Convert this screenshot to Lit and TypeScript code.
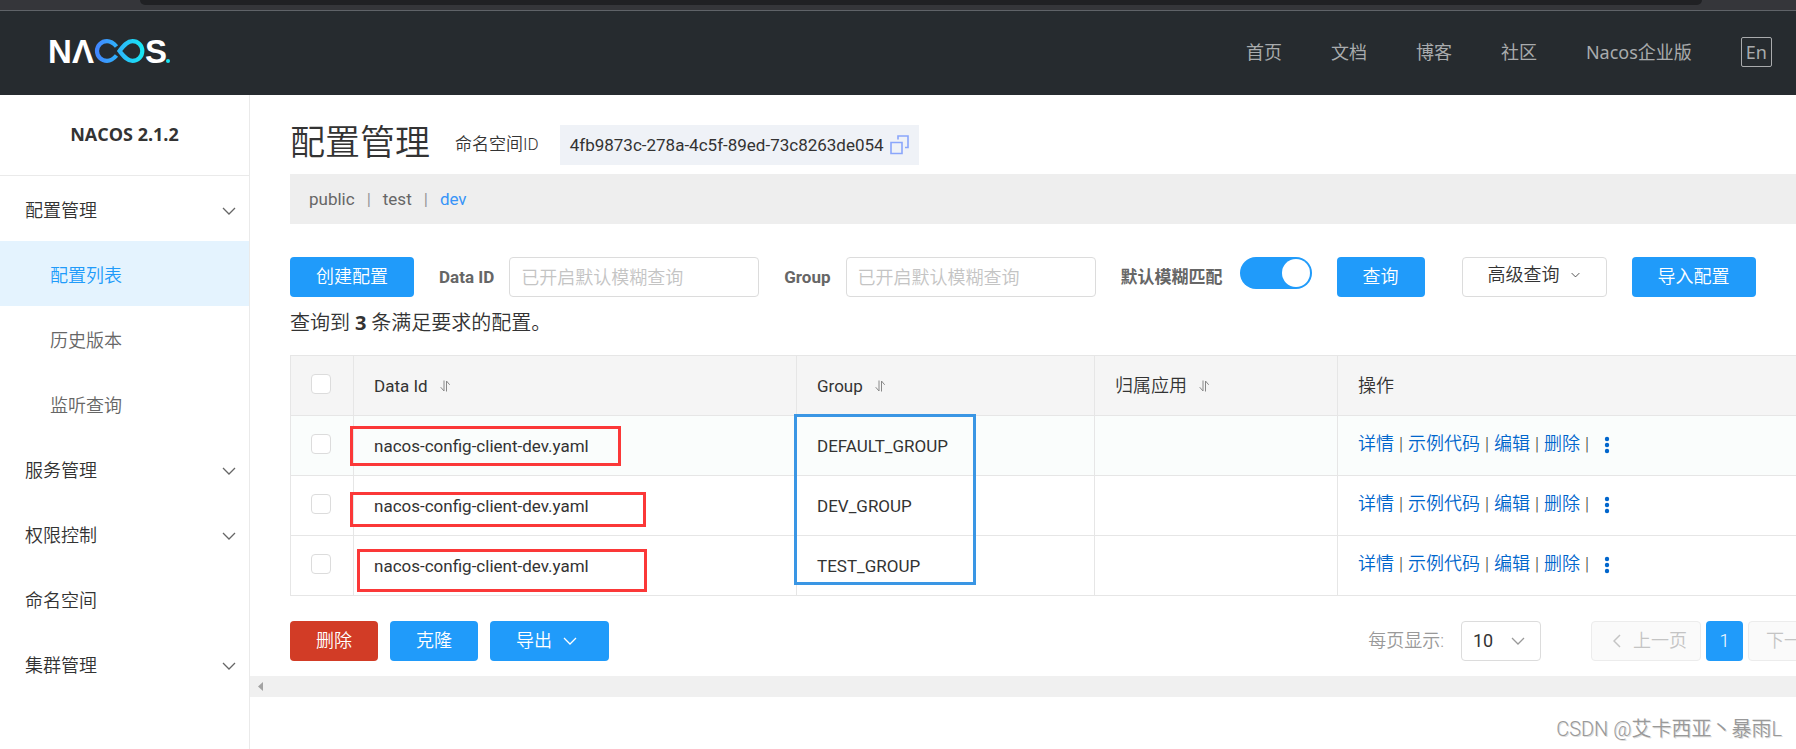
import { LitElement, html, css, svg } from "lit";
import { customElement, state } from "lit/decorators.js";

interface MenuItem {
  label: string;
  expandable?: boolean;
  children?: string[];
}

const MENU: MenuItem[] = [
  { label: "配置管理", expandable: true, children: ["配置列表", "历史版本", "监听查询"] },
  { label: "服务管理", expandable: true },
  { label: "权限控制", expandable: true },
  { label: "命名空间" },
  { label: "集群管理", expandable: true },
];

const NAV = ["首页", "文档", "博客", "社区", "Nacos企业版"];
const NAMESPACES = ["public", "test", "dev"];
const ACTIONS = ["详情", "示例代码", "编辑", "删除"];
const ROWS = [
  { dataId: "nacos-config-client-dev.yaml", group: "DEFAULT_GROUP" },
  { dataId: "nacos-config-client-dev.yaml", group: "DEV_GROUP" },
  { dataId: "nacos-config-client-dev.yaml", group: "TEST_GROUP" },
];

const chevron = html`<svg class="chevron" viewBox="0 0 14 8" aria-hidden="true">
  ${svg`<path d="M1 1l6 6 6-6" fill="none" stroke="currentColor" stroke-width="1.3"/>`}
</svg>`;

const sortIcon = html`<svg class="sort" viewBox="0 0 10 12" aria-hidden="true">
  ${svg`<path d="M4 0.5V11L0.7 7.2M6.5 11.5V1L9.7 4.8" fill="none" stroke="currentColor" stroke-width="1"/>`}
</svg>`;

@customElement("nacos-header")
export class NacosHeader extends LitElement {
  static styles = css`
    :host {
      display: block;
      font-family: "Noto Sans", "Noto Sans CJK SC", sans-serif;
    }
    .browser {
      height: 10px;
      padding: 0 94px 0 140px;
      background: #35363a;
      border-bottom: 1px solid #5f6368;
    }
    .omnibox {
      height: 5px;
      background: #202124;
      border-radius: 0 0 14px 14px;
    }
    .bar {
      display: flex;
      align-items: center;
      justify-content: space-between;
      height: 84px;
      padding: 0 24px 0 50px;
      background: #262b2f;
    }
    .logo {
      display: block;
      width: 122px;
      height: 26px;
      margin-bottom: 4px;
      overflow: visible;
    }
    .logo text {
      font: bold 33px "Liberation Sans", sans-serif;
      fill: #fff;
    }
    .nav {
      display: flex;
      align-items: center;
      gap: 49px;
      margin-bottom: 2px;
    }
    .link {
      color: #a9abad;
      font-size: 18px;
      line-height: 28px;
      text-decoration: none;
    }
    .lang {
      height: 30px;
      padding: 0 4px;
      border: 1px solid #a9abad;
      border-radius: 2px;
      background: none;
      color: #a9abad;
      font: 18px/26px "Noto Sans", sans-serif;
    }
  `;

  render() {
    return html`
      <div class="browser"><div class="omnibox"></div></div>
      <header class="bar">
        <svg class="logo" viewBox="0 0 122 26" role="img" aria-label="NACOS">
          <defs>
            <linearGradient id="flow" x1="0" x2="1">
              <stop offset="0" stop-color="#4287ff"></stop>
              <stop offset="1" stop-color="#17e6f5"></stop>
            </linearGradient>
          </defs>
          <text x="-2" y="25">N</text>
          <text x="22" y="25">Λ</text>
          <text x="95" y="25">S</text>
          <path
            d="M66.5 8.5C63.5 5 60.5 3.200 57 3.200C51.500 3.200 47 7.600 47 13C47 18.400 51.500 22.800 57 22.800C60.500 22.800 63.500 21 66.500 17.500M69.500 13C73.500 8 77 3.200 82.500 3.200C88 3.200 92.300 7.600 92.300 13C92.300 18.400 88 22.800 82.500 22.800C77 22.800 73.500 18 69.500 13Z"
            fill="none" stroke="url(#flow)" stroke-width="4.200"></path>
          <circle cx="118" cy="23" r="2" fill="#17e6f5"></circle>
        </svg>
        <nav class="nav">
          ${NAV.map((n) => html`<a class="link" href="#">${n}</a>`)}
          <button class="lang">En</button>
        </nav>
      </header>
    `;
  }
}

@customElement("nacos-sidebar")
export class NacosSidebar extends LitElement {
  static styles = css`
    :host {
      display: block;
      box-sizing: border-box;
      width: 250px;
      flex: none;
      border-right: 1px solid #eaeaea;
      font-family: Roboto, "Noto Sans CJK SC", sans-serif;
      font-weight: 350;
    }
    .title {
      margin: 0;
      padding-bottom: 2px;
      border-bottom: 1px solid #eaeaea;
      color: #333;
      font: bold 18px/78px "Open Sans", sans-serif;
      text-align: center;
    }
    .list {
      margin: 0;
      padding: 0;
      list-style: none;
    }
    .item {
      display: flex;
      align-items: center;
      justify-content: space-between;
      height: 65px;
      padding: 4px 13px 0 25px;
      box-sizing: border-box;
      color: #333;
      font-size: 18px;
      line-height: 28px;
      text-decoration: none;
    }
    .child {
      padding-left: 50px;
      color: #666;
    }
    .active {
      background: #e4f3fe;
      color: #209bfa;
    }
    .chevron {
      width: 14px;
      height: 8px;
      color: #666;
    }
  `;

  render() {
    return html`
      <h3 class="title">NACOS 2.1.2</h3>
      <ul class="list">
        ${MENU.map(
          (m) => html`
            <li>
              <a class="item" href="#">${m.label}${m.expandable ? chevron : ""}</a>
              ${m.children
                ? html`<ul class="list">
                    ${m.children.map(
                      (c, i) => html`<li>
                        <a class="item child ${i === 0 ? "active" : ""}" href="#">${c}</a>
                      </li>`,
                    )}
                  </ul>`
                : ""}
            </li>
          `,
        )}
      </ul>
    `;
  }
}

@customElement("config-list")
export class ConfigList extends LitElement {
  @state() private fuzzy = true;

  static styles = css`
    :host {
      display: block;
      flex: 1;
      min-width: 0;
      overflow: hidden;
      color: #333;
      font: 350 18px/28px Roboto, "Noto Sans CJK SC", sans-serif;
    }
    .content {
      min-width: 1568px;
      padding: 30px 0 15px 40px;
    }
    .latin {
      font-size: 17px;
      font-weight: 400;
    }
    .head {
      display: flex;
      align-items: center;
      height: 38px;
      padding-bottom: 2px;
    }
    .title {
      margin: 0 25px 0 0;
      font-size: 35px;
      font-weight: 350;
      line-height: 40px;
    }
    .ns-label {
      font-size: 17px;
    }
    .ns-id {
      display: flex;
      align-items: center;
      gap: 6px;
      height: 40px;
      margin: 2px 0 0 21px;
      padding: 0 10px;
      box-sizing: border-box;
      background: #eff2f7;
    }
    .copy {
      display: block;
      padding: 0;
      border: 0;
      background: none;
      color: #8aa6fb;
    }
    .copy svg {
      display: block;
      width: 19px;
      height: 20px;
    }
    .ns-bar {
      display: flex;
      align-items: center;
      gap: 12px;
      height: 50px;
      margin: 9px 0 33px;
      padding-left: 19px;
      box-sizing: border-box;
      background: #eee;
      color: #999;
    }
    .ns {
      color: #666;
      text-decoration: none;
    }
    .ns.current {
      color: #3794f8;
    }
    .tools {
      display: flex;
      align-items: center;
      gap: 25px;
    }
    .btn {
      display: inline-flex;
      align-items: center;
      justify-content: center;
      height: 40px;
      padding: 0 26px;
      box-sizing: border-box;
      border: 0;
      border-radius: 4px;
      background: #209bfa;
      color: #fff;
      font: inherit;
    }
    .btn .chevron {
      margin: 0 6px 0 11px;
    }
    .danger {
      background: #d23c26;
    }
    .btn.normal {
      padding: 0 20px 4px 25px;
      border: 1px solid #dcdcdc;
      background: #fff;
      color: #333;
    }
    .advanced {
      margin-left: 12px;
    }
    .advanced .chevron {
      width: 9px;
      height: 6px;
    }
    .field {
      display: flex;
      align-items: center;
      gap: 15px;
      height: 40px;
    }
    .label {
      color: #666;
      font-weight: 700;
      font-size: 17px;
    }
    .input {
      width: 250px;
      height: 40px;
      padding: 0 11px;
      box-sizing: border-box;
      border: 1px solid #dcdcdc;
      border-radius: 4px;
      color: #333;
      font: inherit;
    }
    .input::placeholder {
      color: #c4c4c4;
    }
    .switch {
      position: relative;
      width: 72px;
      height: 32px;
      margin: 0 0 0 2px;
      align-self: flex-start;
      border-radius: 16px;
      background: #ccc;
      appearance: none;
    }
    .switch::before {
      content: "";
      position: absolute;
      top: 2px;
      left: 2px;
      width: 28px;
      height: 28px;
      border-radius: 50%;
      background: #fff;
    }
    .switch:checked {
      background: #209bfa;
    }
    .switch:checked::before {
      left: auto;
      right: 2px;
    }
    .summary {
      margin: 12px 0 18px;
      font-size: 20px;
    }
    .summary strong {
      font-family: "Open Sans", sans-serif;
      font-weight: 700;
    }
    .board {
      position: relative;
    }
    .table {
      width: 100%;
      border-collapse: collapse;
      table-layout: fixed;
    }
    .c-check {
      width: 63px;
    }
    .c-id {
      width: 443px;
    }
    .c-group {
      width: 298px;
    }
    .c-app {
      width: 243px;
    }
    .cell {
      height: 60px;
      padding: 0 20px;
      box-sizing: border-box;
      border: 1px solid #e6e6e6;
      font-weight: 350;
      text-align: left;
      white-space: nowrap;
    }
    .cell.latin {
      font-weight: 400;
    }
    .th {
      background: #f5f5f5;
    }
    .hover {
      background: #fafdfc;
    }
    .check {
      display: block;
      width: 20px;
      height: 20px;
      margin: 0 0 4px;
      border: 1px solid #dcdcdc;
      border-radius: 4px;
      background: #fff;
      appearance: none;
    }
    .sort {
      width: 10px;
      height: 12px;
      margin-left: 12px;
      color: #888;
    }
    .actions {
      display: flex;
      align-items: center;
      gap: 5px;
      padding-bottom: 4px;
    }
    .act {
      color: #06c;
      text-decoration: none;
    }
    .more {
      display: block;
      margin: 2px 0 0 10px;
      padding: 0;
      border: 0;
      background: none;
      color: #06c;
    }
    .more svg {
      display: block;
      width: 6px;
      height: 18px;
    }
    .mark {
      position: absolute;
      box-sizing: border-box;
      border: 3px solid #fb3838;
      pointer-events: none;
    }
    .m1 {
      left: 60px;
      top: 71px;
      width: 271px;
      height: 40px;
    }
    .m2 {
      left: 60px;
      top: 137px;
      width: 296px;
      height: 35px;
    }
    .m3 {
      left: 67px;
      top: 194px;
      width: 290px;
      height: 43px;
    }
    .m4 {
      left: 504px;
      top: 59px;
      width: 182px;
      height: 171px;
      border-color: #3a96e4;
    }
    .footer {
      display: flex;
      justify-content: space-between;
      margin-top: 25px;
    }
    .batch {
      display: flex;
      gap: 12px;
    }
    .pager {
      display: flex;
      align-items: center;
      gap: 5px;
    }
    .size {
      display: flex;
      align-items: center;
      gap: 17px;
      margin-right: 45px;
      color: #999;
    }
    .select-box {
      display: grid;
      align-items: center;
      width: 80px;
      color: #999;
    }
    .select-box > * {
      grid-area: 1 / 1;
    }
    .select-box .chevron {
      justify-self: end;
      margin-right: 16px;
      pointer-events: none;
    }
    .select {
      height: 40px;
      padding: 0 11px;
      border: 1px solid #dcdcdc;
      border-radius: 4px;
      background: #fff;
      color: #333;
      font: inherit;
      font-weight: 400;
      appearance: none;
    }
    .page {
      height: 40px;
      min-width: 37px;
      padding: 0 12px;
      border: 0;
      border-radius: 4px;
      background: #209bfa;
      color: #fff;
      font: inherit;
    }
    .step {
      display: flex;
      align-items: center;
      justify-content: center;
      gap: 12px;
      width: 110px;
      border: 1px solid #ececec;
      background: #fafafa;
      color: #c4c4c4;
    }
    .prev {
      padding-left: 20px;
    }
    .step svg {
      width: 8px;
      height: 14px;
    }
    .chevron {
      width: 14px;
      height: 8px;
    }
    .scroll {
      display: flex;
      align-items: center;
      height: 21px;
      padding-left: 8px;
      background: #f0f0f0;
    }
    .scroll svg {
      width: 5px;
      height: 9px;
    }
    .watermark {
      margin: 18px 14px 0 0;
      color: #999;
      font-size: 20px;
      line-height: 28px;
      text-align: right;
      text-shadow: 1px 1px 0 #ddd;
    }
  `;

  private renderRow(row: { dataId: string; group: string }, index: number) {
    return html`
      <tr class=${index === 0 ? "hover" : ""}>
        <td class="cell">
          <input class="check" type="checkbox" aria-label="选择 ${row.group}" />
        </td>
        <td class="cell latin">${row.dataId}</td>
        <td class="cell latin">${row.group}</td>
        <td class="cell"></td>
        <td class="cell">
          <div class="actions">
            ${ACTIONS.map((a) => html`<a class="act" href="#">${a}</a><span>|</span>`)}
            <button class="more" aria-label="更多">
              <svg viewBox="0 0 6 18">
                <circle cx="3" cy="3" r="2.200" fill="currentColor"></circle>
                <circle cx="3" cy="9" r="2.200" fill="currentColor"></circle>
                <circle cx="3" cy="15" r="2.200" fill="currentColor"></circle>
              </svg>
            </button>
          </div>
        </td>
      </tr>
    `;
  }

  render() {
    return html`
      <div class="content">
        <div class="head">
          <h1 class="title">配置管理</h1>
          <span class="ns-label">命名空间ID</span>
          <span class="ns-id latin">
            4fb9873c-278a-4c5f-89ed-73c8263de054
            <button class="copy" aria-label="复制">
              <svg viewBox="0 0 19 20">
                <path d="M1 7.500h11v11H1zM8 4.500V1h10v11.500h-3" fill="none" stroke="currentColor" stroke-width="1.600"></path>
              </svg>
            </button>
          </span>
        </div>
        <nav class="ns-bar latin">
          ${NAMESPACES.map(
            (n, i) => html`${i ? html`<span>|</span>` : ""}<a
                class="ns ${n === "dev" ? "current" : ""}"
                href="#"
                >${n}</a
              >`,
          )}
        </nav>
        <div class="tools">
          <button class="btn">创建配置</button>
          <div class="field">
            <label class="label" for="data-id">Data ID</label>
            <input class="input" id="data-id" placeholder="已开启默认模糊查询" />
          </div>
          <div class="field">
            <label class="label" for="group">Group</label>
            <input class="input" id="group" placeholder="已开启默认模糊查询" />
          </div>
          <div class="field">
            <label class="label" for="fuzzy">默认模糊匹配</label>
            <input
              class="switch"
              id="fuzzy"
              type="checkbox"
              role="switch"
              .checked=${this.fuzzy}
              @change=${() => (this.fuzzy = !this.fuzzy)}
            />
          </div>
          <button class="btn">查询</button>
          <button class="btn normal advanced">高级查询${chevron}</button>
          <button class="btn">导入配置</button>
        </div>
        <p class="summary">查询到 <strong>3</strong> 条满足要求的配置。</p>
        <div class="board">
          <table class="table">
            <colgroup>
              <col class="c-check" />
              <col class="c-id" />
              <col class="c-group" />
              <col class="c-app" />
              <col />
            </colgroup>
            <thead>
              <tr>
                <th class="cell th">
                  <input class="check" type="checkbox" aria-label="全选" />
                </th>
                <th class="cell th latin">Data Id${sortIcon}</th>
                <th class="cell th latin">Group${sortIcon}</th>
                <th class="cell th">归属应用${sortIcon}</th>
                <th class="cell th">操作</th>
              </tr>
            </thead>
            <tbody>
              ${ROWS.map((r, i) => this.renderRow(r, i))}
            </tbody>
          </table>
          <div class="mark m1"></div>
          <div class="mark m2"></div>
          <div class="mark m3"></div>
          <div class="mark m4"></div>
        </div>
        <div class="footer">
          <div class="batch">
            <button class="btn danger">删除</button>
            <button class="btn">克隆</button>
            <button class="btn">导出${chevron}</button>
          </div>
          <div class="pager">
            <div class="size">
              <label for="page-size">每页显示:</label>
              <span class="select-box">
                <select class="select" id="page-size">
                  <option>10</option>
                </select>
                ${chevron}
              </span>
            </div>
            <button class="page step prev">
              <svg viewBox="0 0 8 14"><path d="M7 1L1 7l6 6" fill="none" stroke="currentColor" stroke-width="1.500"></path></svg>
              上一页
            </button>
            <button class="page">1</button>
            <button class="page step">
              下一页
              <svg viewBox="0 0 8 14"><path d="M1 1l6 6-6 6" fill="none" stroke="currentColor" stroke-width="1.500"></path></svg>
            </button>
          </div>
        </div>
      </div>
      <div class="scroll">
        <svg viewBox="0 0 5 9"><path d="M5 0v9L0 4.500z" fill="#a3a3a3"></path></svg>
      </div>
      <p class="watermark">CSDN @艾卡西亚丶暴雨L</p>
    `;
  }
}

@customElement("app-root")
export class AppRoot extends LitElement {
  static styles = css`
    :host {
      display: flex;
      flex-direction: column;
      min-height: 100vh;
      background: #fff;
    }
    .body {
      display: flex;
      flex: 1;
    }
  `;

  render() {
    return html`
      <nacos-header></nacos-header>
      <div class="body">
        <nacos-sidebar></nacos-sidebar>
        <config-list></config-list>
      </div>
    `;
  }
}
